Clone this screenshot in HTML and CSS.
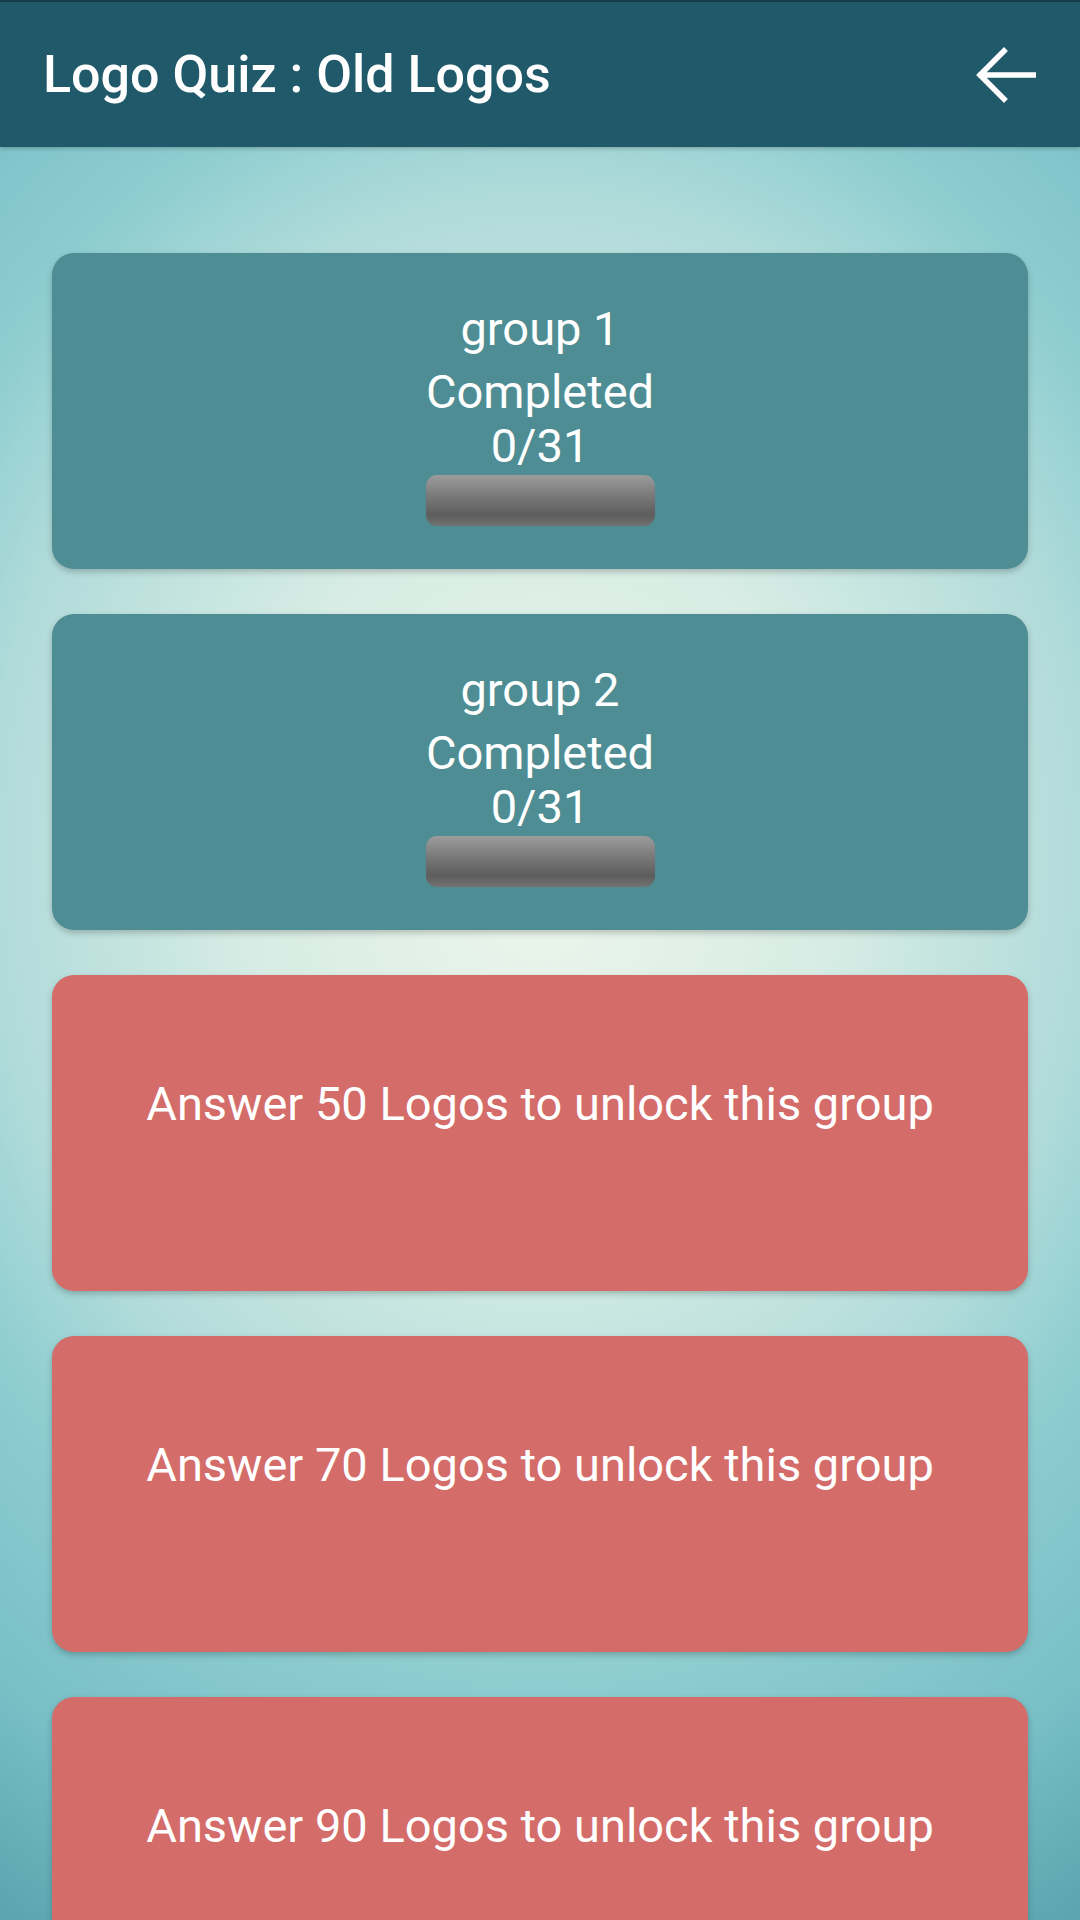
FILE: index.html
```html
<!DOCTYPE html>
<html lang="en">
<head>
    <meta charset="UTF-8">
    <meta name="viewport" content="width=device-width, initial-scale=1.0">
    <title>Logo Quiz : Old Logos</title>
    <link rel="stylesheet" href="styles.css">
</head>
<body>

<div class="toolbar">
    <h1 class="toolbar-title">Logo Quiz : Old Logos</h1>
    <button class="back-btn" aria-label="Back">
        <svg width="60" height="56" viewBox="0 0 60 56">
            <path d="M58 28H5M28 4L4 28l24 24" fill="none" stroke="#fff" stroke-width="5.5" stroke-linecap="square"/>
        </svg>
    </button>
</div>

<div class="group-list">
    <div class="group-card open">
        <div class="group-name">group 1</div>
        <div class="group-line">Completed</div>
        <div class="group-line">0/31</div>
        <div class="progress"></div>
    </div>
    <div class="group-card open">
        <div class="group-name">group 2</div>
        <div class="group-line">Completed</div>
        <div class="group-line">0/31</div>
        <div class="progress"></div>
    </div>
    <div class="group-card locked">
        <div class="group-line">Answer 50 Logos to unlock this group</div>
    </div>
    <div class="group-card locked">
        <div class="group-line">Answer 70 Logos to unlock this group</div>
    </div>
    <div class="group-card locked">
        <div class="group-line">Answer 90 Logos to unlock this group</div>
    </div>
</div>

</body>
</html>
```

FILE: styles.css
```css
body {
    font-family: Roboto, "Liberation Sans", sans-serif;
    margin: 0;
    width: 1080px;
    height: 1920px;
    overflow: hidden;
    color: #fff;
    background: radial-gradient(ellipse 1000px 1200px at 540px 860px, #eef6ec 0%, #d6ece4 30%, #b0dbda 55%, #8ecdd0 68%, #78bfc6 87%, #5aa5b0 103%);
}

.toolbar {
    height: 145px;
    border-top: 2px solid #143c4a;
    background-color: #205969;
    display: flex;
    align-items: center;
    justify-content: space-between;
    padding: 0 43px;
    box-shadow: 0 2px 4px rgba(0, 0, 0, 0.2);
    position: relative;
}

.toolbar-title {
    margin: 0;
    font-size: 52px;
    font-weight: 500;
}

.back-btn {
    background: none;
    border: none;
    padding: 0;
    margin-right: 1px;
    display: flex;
    cursor: pointer;
}

.group-list {
    display: flex;
    flex-direction: column;
    gap: 45px;
    padding: 106px 52px 0;
}

.group-card {
    height: 316px;
    flex-shrink: 0;
    box-sizing: border-box;
    border-radius: 22px;
    display: flex;
    flex-direction: column;
    align-items: center;
    box-shadow: 0 3px 6px rgba(0, 0, 0, 0.22);
}

.group-card.open {
    background-color: #4e8d93;
    padding-top: 49px;
}

.group-card.locked {
    background-color: #d46c6a;
    padding-top: 102px;
}

.group-name,
.group-line {
    font-size: 47px;
    line-height: 54px;
}

.group-name {
    margin-bottom: 9px;
}

.progress {
    width: 229px;
    height: 51px;
    margin-top: 2px;
    border-radius: 11px;
    background: linear-gradient(#9c9c9c, #7a7a7a 40%, #5d5d5d 78%, #727272);
}
```
